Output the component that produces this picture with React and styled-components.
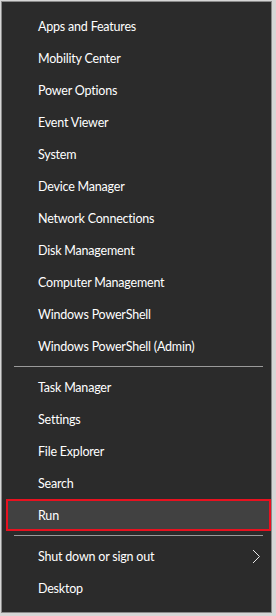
import React from 'react'
import styled, { createGlobalStyle } from 'styled-components'

const Global = createGlobalStyle`
    html, body {
        margin: 0;
        padding: 0;
        background: #d6d6d6;
        width: 276px;
        height: 616px;
        overflow: hidden;
    }
`

const Page = styled.div`
    padding: 1px 0 0 1px;
    font-family: Lato, "Noto Sans", sans-serif;
`

const Menu = styled.div`
    width: 271px;
    height: 612px;
    box-sizing: border-box;
    background: #2b2b2b;
    border: 1px solid #8a8a8a;
    padding-top: 8px;
    display: flex;
    flex-direction: column;
`

const Item = styled.div`
    height: 32px;
    box-sizing: border-box;
    display: flex;
    align-items: center;
    justify-content: space-between;
    padding: 0 10px 0 36px;
    color: #ffffff;
    font-size: 12.5px;
    letter-spacing: -0.2px;
    ${p => p.$selected && `
        margin: 0 0 0 4px;
        padding-left: 30px;
        border: 2px solid #e8111f;
        background: #414141;
    `}
`

const Separator = styled.div`
    height: 9px;
    display: flex;
    align-items: center;
    padding: 0 8px 0 12px;

    &::after {
        content: '';
        flex: 1;
        height: 1px;
        background: #9a9a9a;
    }
`

const Chevron = () => (
    <svg width="9" height="15" viewBox="0 0 9 15">
        <path d="M1 1 L7.5 7.5 L1 14" fill="none" stroke="#e8e8e8" strokeWidth="1" />
    </svg>
)

const groups = [
    [
        'Apps and Features',
        'Mobility Center',
        'Power Options',
        'Event Viewer',
        'System',
        'Device Manager',
        'Network Connections',
        'Disk Management',
        'Computer Management',
        'Windows PowerShell',
        'Windows PowerShell (Admin)',
    ],
    ['Task Manager', 'Settings', 'File Explorer', 'Search', 'Run'],
    ['Shut down or sign out', 'Desktop'],
]

export default function App() {
    return (
        <Page>
            <Global />
            <Menu>
                {groups.map((group, gi) => (
                    <React.Fragment key={gi}>
                        {gi > 0 && <Separator />}
                        {group.map(label => (
                            <Item key={label} $selected={label === 'Run'}>
                                <span>{label}</span>
                                {label === 'Shut down or sign out' && <Chevron />}
                            </Item>
                        ))}
                    </React.Fragment>
                ))}
            </Menu>
        </Page>
    )
}
